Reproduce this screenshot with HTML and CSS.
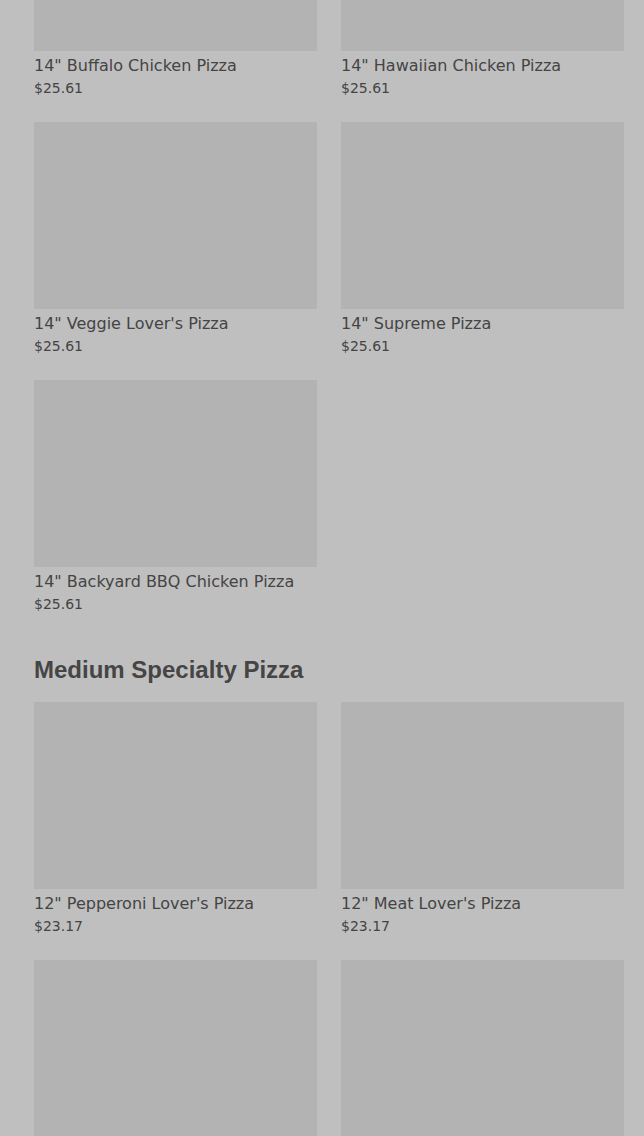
FILE: index.html
```html
<!DOCTYPE html>
<html lang="en">
<head>
  <meta charset="UTF-8">
  <meta name="viewport" content="width=device-width, initial-scale=1.0">
  <title>Menu</title>
  <link rel="stylesheet" href="styles.css">
</head>
<body>
  <div class="menu">
    <section class="category">
      <div class="grid">
        <div class="item">
          <div class="thumb"></div>
          <div class="name">14" Buffalo Chicken Pizza</div>
          <div class="price">$25.61</div>
        </div>
        <div class="item">
          <div class="thumb"></div>
          <div class="name">14" Hawaiian Chicken Pizza</div>
          <div class="price">$25.61</div>
        </div>
        <div class="item">
          <div class="thumb"></div>
          <div class="name">14" Veggie Lover's Pizza</div>
          <div class="price">$25.61</div>
        </div>
        <div class="item">
          <div class="thumb"></div>
          <div class="name">14" Supreme Pizza</div>
          <div class="price">$25.61</div>
        </div>
        <div class="item">
          <div class="thumb"></div>
          <div class="name">14" Backyard BBQ Chicken Pizza</div>
          <div class="price">$25.61</div>
        </div>
      </div>
    </section>

    <section class="category">
      <h2>Medium Specialty Pizza</h2>
      <div class="grid">
        <div class="item">
          <div class="thumb"></div>
          <div class="name">12" Pepperoni Lover's Pizza</div>
          <div class="price">$23.17</div>
        </div>
        <div class="item">
          <div class="thumb"></div>
          <div class="name">12" Meat Lover's Pizza</div>
          <div class="price">$23.17</div>
        </div>
        <div class="item">
          <div class="thumb"></div>
        </div>
        <div class="item">
          <div class="thumb"></div>
        </div>
      </div>
    </section>
  </div>
</body>
</html>
```

FILE: styles.css
```css
body {
  margin: 0;
  padding: 0;
  background-color: #bfbfbf;
  color: #444444;
  font-family: "DejaVu Sans", sans-serif;
  overflow: hidden;
}
.menu {
  margin-top: -136px;
  padding: 0 20px 0 34px;
}
.category h2 {
  margin: 42px 0 18px;
  font-family: "Liberation Sans", Arial, sans-serif;
  font-size: 24px;
  line-height: 28px;
  font-weight: bold;
  color: #454545;
}
.grid {
  display: grid;
  grid-template-columns: 1fr 1fr;
  column-gap: 24px;
  row-gap: 24px;
}
.thumb {
  height: 187px;
  background-color: #b3b3b3;
}
.name {
  margin-top: 3px;
  font-size: 16px;
  line-height: 24px;
}
.price {
  font-size: 14px;
  line-height: 20px;
}
```
